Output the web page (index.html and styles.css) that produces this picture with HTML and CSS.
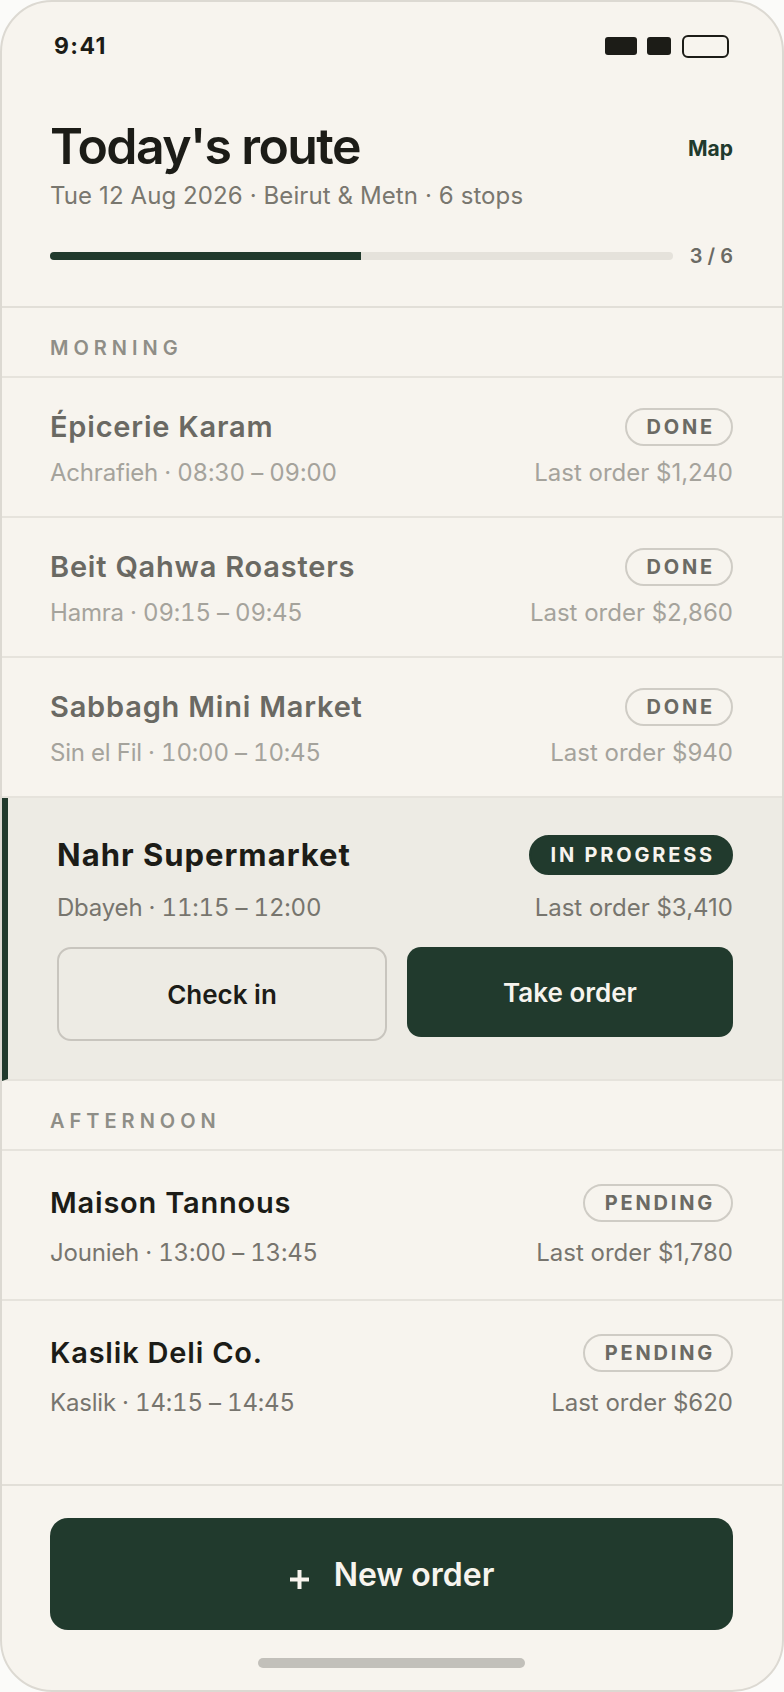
FILE: index.html
```html
<!DOCTYPE html>
<html lang="en">
<head>
  <meta charset="UTF-8">
  <title>Today's route</title>
  <link rel="stylesheet" href="styles.css">
</head>
<body>
  <div class="phone">
    <div class="status-bar">
      <span class="clock">9:41</span>
      <div class="status-icons">
        <span class="sig sig-wide"></span>
        <span class="sig"></span>
        <span class="battery"></span>
      </div>
    </div>

    <header class="route-head">
      <div class="head-top">
        <h1>Today's route</h1>
        <a class="map-link" href="#">Map</a>
      </div>
      <p class="subtitle">Tue 12 Aug 2026 · Beirut &amp; Metn · 6 stops</p>
      <div class="progress">
        <div class="track"><div class="fill" style="width: 50%"></div></div>
        <span class="count">3 / 6</span>
      </div>
    </header>

    <main class="stops">
      <div class="section-label">Morning</div>

      <div class="stop done">
        <div class="stop-top">
          <span class="name">Épicerie Karam</span>
          <span class="badge">Done</span>
        </div>
        <div class="stop-meta">
          <span class="where">Achrafieh · 08:30 – 09:00</span>
          <span>Last order $1,240</span>
        </div>
      </div>

      <div class="stop done">
        <div class="stop-top">
          <span class="name">Beit Qahwa Roasters</span>
          <span class="badge">Done</span>
        </div>
        <div class="stop-meta">
          <span class="where">Hamra · 09:15 – 09:45</span>
          <span>Last order $2,860</span>
        </div>
      </div>

      <div class="stop done">
        <div class="stop-top">
          <span class="name">Sabbagh Mini Market</span>
          <span class="badge">Done</span>
        </div>
        <div class="stop-meta">
          <span class="where">Sin el Fil · 10:00 – 10:45</span>
          <span>Last order $940</span>
        </div>
      </div>

      <div class="stop active">
        <div class="stop-top">
          <span class="name">Nahr Supermarket</span>
          <span class="badge badge-live">In progress</span>
        </div>
        <div class="stop-meta">
          <span class="where">Dbayeh · 11:15 – 12:00</span>
          <span>Last order $3,410</span>
        </div>
        <div class="stop-actions">
          <button class="btn btn-outline">Check in</button>
          <button class="btn btn-solid">Take order</button>
        </div>
      </div>

      <div class="section-label">Afternoon</div>

      <div class="stop pending">
        <div class="stop-top">
          <span class="name">Maison Tannous</span>
          <span class="badge">Pending</span>
        </div>
        <div class="stop-meta">
          <span class="where">Jounieh · 13:00 – 13:45</span>
          <span>Last order $1,780</span>
        </div>
      </div>

      <div class="stop pending">
        <div class="stop-top">
          <span class="name">Kaslik Deli Co.</span>
          <span class="badge">Pending</span>
        </div>
        <div class="stop-meta">
          <span class="where">Kaslik · 14:15 – 14:45</span>
          <span>Last order $620</span>
        </div>
      </div>
    </main>

    <footer class="footer">
      <button class="new-order">
        <svg class="plus" width="21" height="21" viewBox="0 0 21 21"><path d="M10.5 1v19M1 10.5h19" stroke="currentColor" stroke-width="4" fill="none"/></svg>
        New order
      </button>
      <div class="home-bar"></div>
    </footer>
  </div>
</body>
</html>
```

FILE: styles.css
```css
* {
  box-sizing: border-box;
}
body {
  margin: 0;
  background-color: #fbfbf9;
  font-family: Inter, "Noto Sans", sans-serif;
  color: #1c1c17;
}
.phone {
  width: 784px;
  height: 1692px;
  border: 2px solid #dcd9d2;
  border-radius: 52px;
  background-color: #f7f4ee;
  overflow: hidden;
  display: flex;
  flex-direction: column;
}

/* status bar */
.status-bar {
  height: 88px;
  padding: 0 53px 0 52px;
  display: flex;
  justify-content: space-between;
  align-items: center;
}
.clock {
  font-size: 23px;
  font-weight: 700;
  letter-spacing: 1.4px;
}
.status-icons {
  display: flex;
  align-items: center;
  gap: 10px;
}
.sig {
  width: 24px;
  height: 18px;
  border-radius: 3px;
  background-color: #1c1c17;
}
.sig-wide {
  width: 32px;
}
.battery {
  width: 47px;
  height: 23px;
  border: 2.5px solid #1c1c17;
  border-radius: 6px;
  margin-left: 1px;
}

/* header */
.route-head {
  padding: 29px 49px 37px 48px;
  border-bottom: 2px solid #e2dfd8;
}
.head-top {
  display: flex;
  justify-content: space-between;
  align-items: center;
}
h1 {
  margin: 0;
  font-size: 50px;
  line-height: 55px;
  font-weight: 600;
  letter-spacing: -1.6px;
}
.map-link {
  color: #213a2d;
  font-size: 21px;
  font-weight: 700;
  text-decoration: none;
  margin-top: 3px;
}
.subtitle {
  margin: 7px 0 0;
  font-size: 24px;
  line-height: 30px;
  color: #79776f;
  letter-spacing: 0.1px;
}
.progress {
  margin-top: 32px;
  display: flex;
  align-items: center;
  gap: 17px;
}
.track {
  flex: 1;
  height: 8px;
  border-radius: 4px;
  background-color: #e5e2db;
  overflow: hidden;
}
.fill {
  height: 100%;
  background-color: #213a2d;
}
.count {
  font-size: 20px;
  line-height: 26px;
  font-weight: 600;
  color: #6b6a64;
}

/* list */
.stops {
  flex: 1;
  overflow: hidden;
}
.section-label {
  padding: 28px 48px 16px;
  line-height: 24px;
  font-size: 20px;
  font-weight: 600;
  letter-spacing: 5px;
  text-transform: uppercase;
  color: #8f8e87;
  border-bottom: 2px solid #e6e3dc;
}
.stop {
  padding: 30px 49px 28px 48px;
  border-bottom: 2px solid #e6e3dc;
}
.stop:last-child {
  border-bottom: none;
}
.stop-top {
  display: flex;
  justify-content: space-between;
  align-items: center;
}
.name {
  font-size: 29px;
  line-height: 36px;
  font-weight: 600;
  letter-spacing: 0.8px;
}
.badge {
  height: 38px;
  padding: 0 16px 0 20px;
  border: 2px solid #cfccc5;
  border-radius: 19px;
  display: flex;
  align-items: center;
  font-size: 20px;
  font-weight: 700;
  letter-spacing: 2.8px;
  text-transform: uppercase;
  color: #6b6a64;
}
.stop-meta {
  margin-top: 12px;
  display: flex;
  justify-content: space-between;
  font-size: 24px;
  line-height: 30px;
  color: #77756e;
}
.where {
  font-variant-numeric: tabular-nums;
  letter-spacing: -0.2px;
}

.done .name {
  color: #6a6963;
}
.done .stop-meta {
  color: #a5a39c;
}

.pending {
  padding: 33px 49px 31px 48px;
}
.pending .stop-meta {
  margin-top: 16px;
}

.active {
  background-color: #edebe4;
  border-left: 6px solid #213a2d;
  padding: 37px 49px 38px 49px;
}
.active .name {
  font-size: 31px;
  font-weight: 700;
  letter-spacing: 1px;
}
.active .badge {
  height: 40px;
  border-radius: 20px;
}
.badge-live {
  background-color: #213a2d;
  border-color: #213a2d;
  color: #f7f4ee;
}
.active .stop-meta {
  margin-top: 18px;
}
.stop-actions {
  margin-top: 24px;
  display: flex;
  align-items: flex-start;
  gap: 20px;
}
.btn {
  flex: 1 1 0;
  box-sizing: content-box;
  height: 90px;
  padding: 0;
  border-radius: 14px;
  font-family: inherit;
  font-size: 26px;
  font-weight: 600;
}
.btn-outline {
  background-color: #edebe4;
  border: 2px solid #c8c5be;
  color: #1c1c17;
}
.btn-solid {
  background-color: #213a2d;
  border: none;
  color: #f7f4ee;
}

/* footer */
.footer {
  border-top: 2px solid #e2dfd8;
  padding: 32px 49px 22px 48px;
  display: flex;
  flex-direction: column;
  align-items: center;
  gap: 28px;
}
.new-order {
  width: 100%;
  height: 112px;
  border: none;
  border-radius: 18px;
  background-color: #213a2d;
  color: #f7f4ee;
  font-family: inherit;
  font-size: 32px;
  font-weight: 600;
  display: flex;
  justify-content: center;
  align-items: center;
  gap: 24px;
}
.plus {
  margin-top: 10px;
}
.home-bar {
  width: 267px;
  height: 10px;
  border-radius: 5px;
  background-color: #c2c0ba;
}
```
